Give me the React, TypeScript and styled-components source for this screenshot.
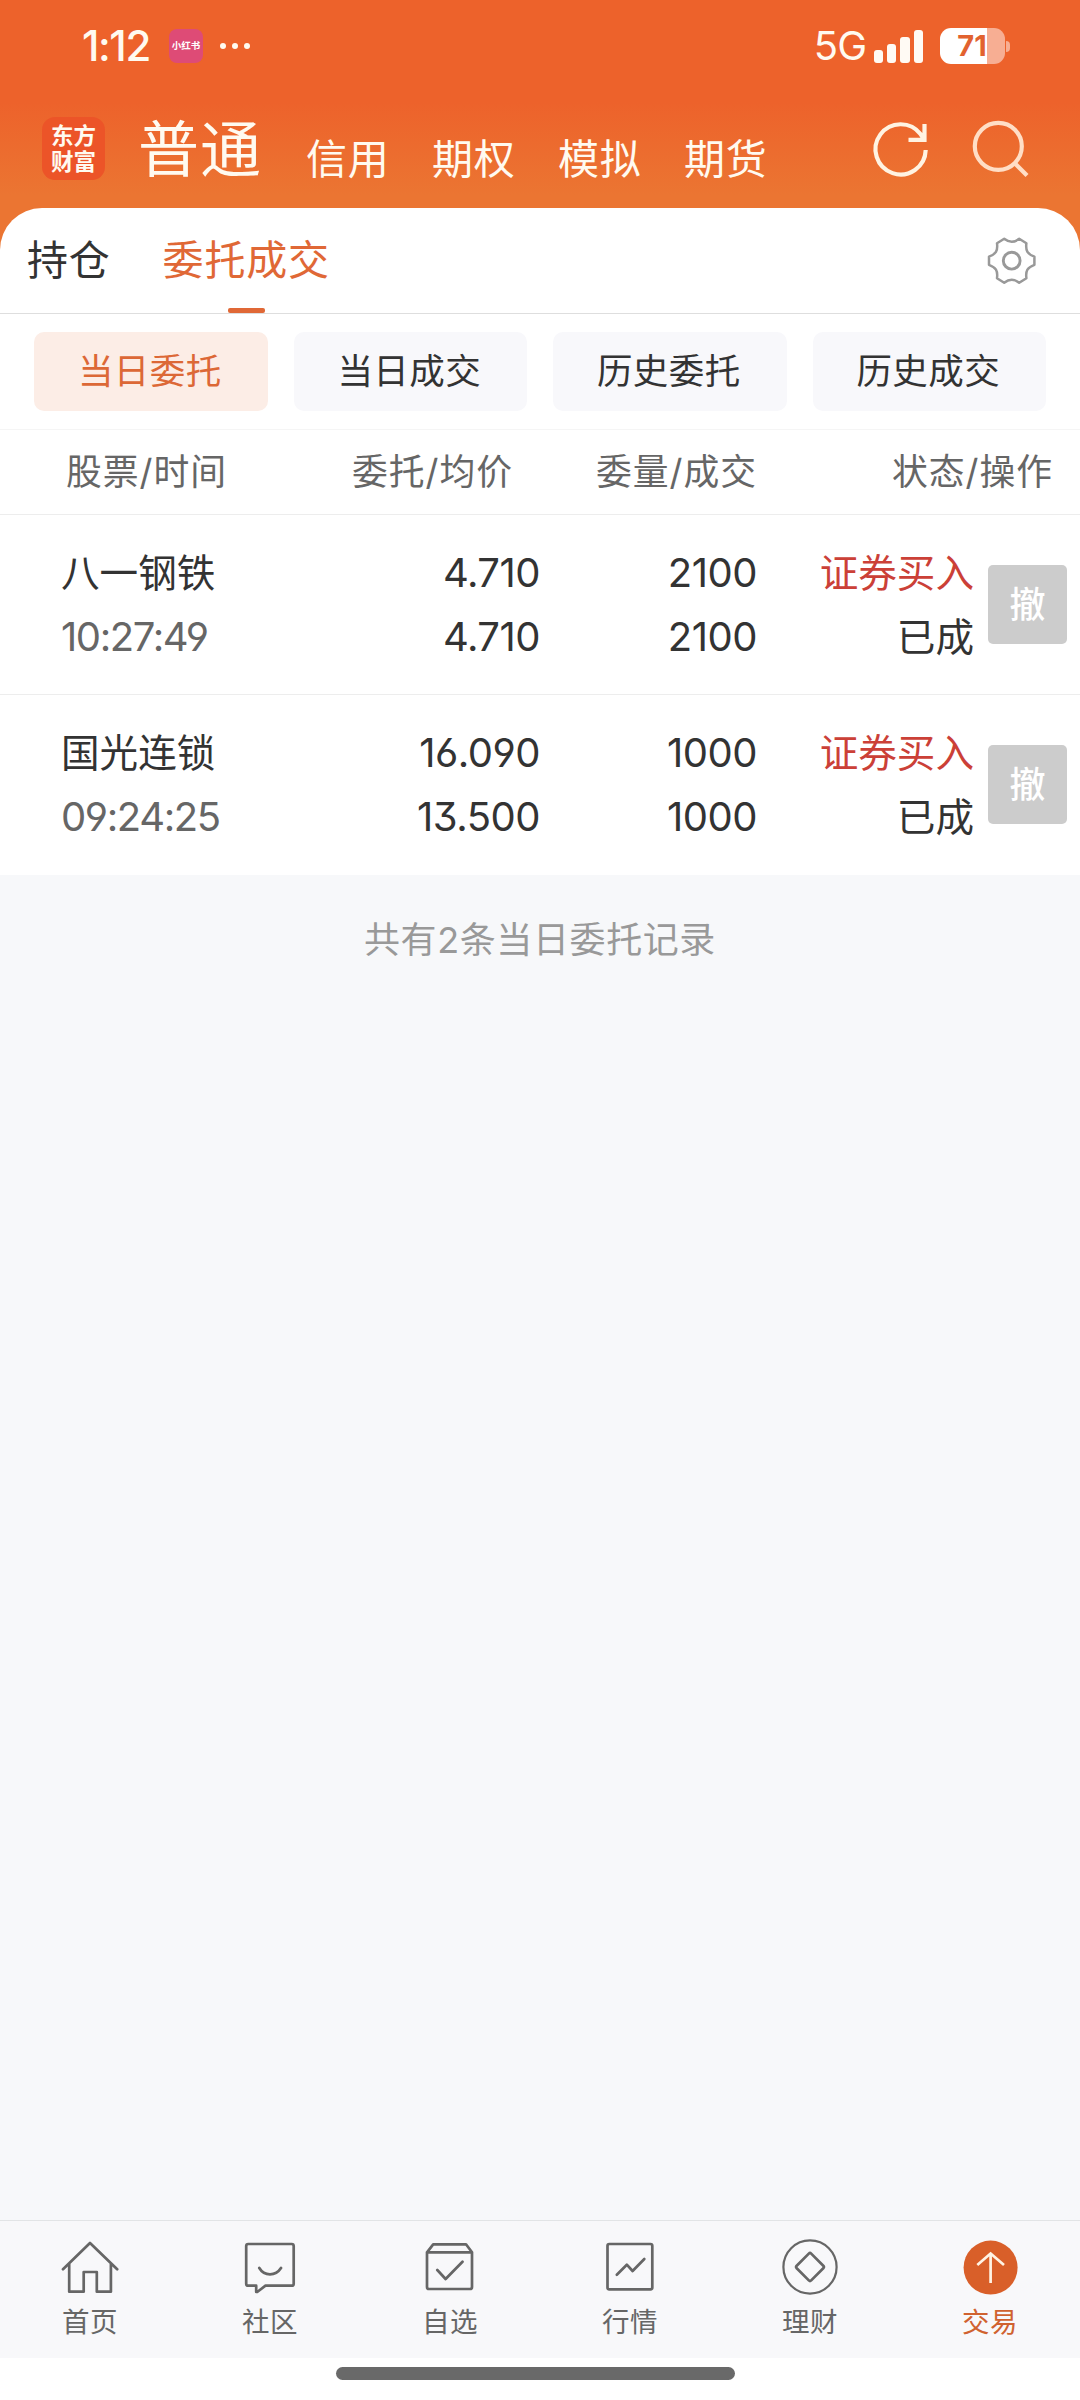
import React from 'react';
import styled, { createGlobalStyle } from 'styled-components';

const GlobalStyle = createGlobalStyle`
  * { box-sizing: border-box; }
  body {
    margin: 0;
    font-family: Inter, "Noto Sans CJK SC", sans-serif;
    color: #333;
    background: #fff;
  }
`;

const Screen = styled.div`
  width: 1080px;
  height: 2400px;
  display: flex;
  flex-direction: column;
  overflow: hidden;
  white-space: nowrap;
  background: linear-gradient(180deg, #ed622b 0px, #ed622b 102px, #eb7532 195px, #eb7532 260px);
`;

const StatusBar = styled.div`
  height: 92px;
  flex: none;
  display: flex;
  align-items: center;
  padding: 0 70px 0 82px;
  color: #fffaf0;
`;

const Clock = styled.div`
  width: 87px;
  font-size: 42px;
  font-weight: 500;
  line-height: 50px;
  letter-spacing: -1.4px;
`;

const AppBadge = styled.div`
  width: 34px;
  height: 34px;
  border-radius: 8px;
  background: #de4b76;
  color: #fff;
  font-size: 9.5px;
  font-weight: 700;
  line-height: 34px;
  text-align: center;
`;

const Dots = styled.div`
  display: flex;
  gap: 6px;
  margin-left: 17px;
`;

const Dot = styled.i`
  width: 6px;
  height: 6px;
  border-radius: 50%;
  background: #fffaf0;
`;

const Network = styled.div`
  margin-left: auto;
  font-size: 40px;
  line-height: 50px;
  letter-spacing: -1px;
  width: 60px;
`;

const SignalBars = styled.div`
  display: flex;
  align-items: flex-end;
  gap: 4px;
  height: 33px;
`;

const SignalBar = styled.i<{ $h: number }>`
  width: 9.3px;
  height: ${(p) => p.$h}px;
  border-radius: 3px;
  background: #fffaf4;
`;

const Battery = styled.div`
  width: 65px;
  height: 36px;
  margin-left: 17px;
  border-radius: 11px;
  background: linear-gradient(90deg, #fff 47px, #f7ae93 47px);
  color: #e2622f;
  font-size: 29px;
  font-weight: 700;
  line-height: 36px;
  text-align: center;
  padding-right: 1px;
`;

const BatteryTip = styled.i`
  width: 4px;
  height: 11px;
  margin-left: 1px;
  border-radius: 0 5px 5px 0;
  background: #f7ae93;
`;

const Header = styled.header`
  height: 116px;
  flex: none;
  display: flex;
  align-items: flex-start;
  padding-left: 42px;
  color: #fffaf0;
`;

const Logo = styled.div`
  width: 63px;
  height: 63px;
  margin: 25px 33px 0 0;
  padding-top: 6px;
  border-radius: 13px;
  background: #ec5428;
  text-align: center;
  font-size: 22.5px;
  font-weight: 700;
  line-height: 26px;
`;

const Market = styled.div<{ $active?: boolean }>`
  font-size: ${(p) => (p.$active ? 61 : 41)}px;
  letter-spacing: ${(p) => (p.$active ? 1 : 0.8)}px;
  line-height: 60px;
  width: ${(p) => (p.$active ? 168 : 126)}px;
  margin-top: ${(p) => (p.$active ? 28 : 37)}px;
`;

const HeaderIcon = styled.svg`
  width: 64px;
  height: 64px;
  flex: none;
  margin: 26px 36px 0 0;
  fill: none;
  stroke-width: 4.2;
`;

const HeaderTools = styled.div`
  display: flex;
  margin-left: 58px;
`;

const Panel = styled.section`
  flex: none;
  background: #fff;
  border-radius: 42px 42px 0 0;
`;

const TabBar = styled.nav`
  height: 106px;
  display: flex;
  padding: 0 44px 0 27px;
  border-bottom: 1px solid #dedede;
`;

const Tab = styled.div<{ $active?: boolean }>`
  display: flex;
  flex-direction: column;
  justify-content: space-between;
  align-items: center;
  margin-right: 52px;
  font-size: 41px;
  letter-spacing: 0.8px;
  line-height: 105px;
  height: 105px;
  color: ${(p) => (p.$active ? '#e06836' : '#333')};

  &::after {
    content: '';
    width: 37px;
    height: 5px;
    flex: none;
    border-radius: 2px;
    margin-top: -5px;
    background: ${(p) => (p.$active ? '#e06836' : 'transparent')};
  }
`;

const Gear = styled.svg`
  width: 50px;
  height: 50px;
  margin: 28px 0 0 auto;
  fill: none;
  stroke: #999;
  stroke-width: 2.5;
  stroke-linejoin: round;
`;

const Chips = styled.div`
  height: 116px;
  display: grid;
  grid-template-columns: repeat(4, 1fr);
  gap: 26px;
  padding: 18px 34px;
  border-bottom: 1px solid #f5f5f5;
`;

const Chip = styled.button<{ $active?: boolean }>`
  height: 79px;
  padding: 0 2px 0 0;
  border: 0;
  border-radius: 10px;
  font: inherit;
  font-size: 35.5px;
  line-height: 77px;
  letter-spacing: 0.4px;
  background: ${(p) => (p.$active ? '#fcede6' : '#f8f8fb')};
  color: ${(p) => (p.$active ? '#dc6836' : '#333')};
`;

const Columns = styled.div`
  height: 85px;
  display: grid;
  grid-template-columns: 286px 244px 296px auto;
  padding-left: 66px;
  border-bottom: 1px solid #ededed;
  color: #666;
  font-size: 35.8px;
  line-height: 85px;
  letter-spacing: 1px;
`;

const OrderRow = styled.div`
  height: 180px;
  display: grid;
  grid-template-columns: 300px 179px 217px 217px 79px;
  align-items: center;
  padding-left: 61px;
  border-bottom: 1px solid #ededed;

  &:last-child { border-bottom-color: #fff; }
`;

const Cell = styled.div<{ $end?: boolean }>`
  display: flex;
  flex-direction: column;
  align-items: ${(p) => (p.$end ? 'flex-end' : 'flex-start')};
  font-size: 38.6px;
  line-height: 64px;
  font-feature-settings: 'cv03', 'cv04', 'cv09';
`;

const Figure = styled.span<{ $muted?: boolean }>`
  font-size: 40px;
  letter-spacing: ${(p) => (p.$muted ? -1.4 : -0.5)}px;
  color: ${(p) => (p.$muted ? '#666' : '#333')};
`;

const Side = styled.span`
  color: #cb4037;
`;

const CancelButton = styled.button`
  width: 79px;
  height: 79px;
  margin-left: 14px;
  padding: 0 0 5px;
  border: 0;
  border-radius: 5px;
  background: #ccc;
  color: #fff;
  font: inherit;
  font-size: 36px;
  font-weight: 500;
`;

const Body = styled.main`
  flex: 1;
  background: #f7f8fa;
`;

const Summary = styled.p`
  margin: 35px 0 0;
  text-align: center;
  color: #999;
  font-size: 36px;
  letter-spacing: 0.6px;
  line-height: 60px;
`;

const BottomNav = styled.nav`
  height: 138px;
  flex: none;
  display: grid;
  grid-template-columns: repeat(6, 1fr);
  background: #f8f8fa;
  border-top: 1px solid #e2e4e6;
`;

const NavItem = styled.div<{ $active?: boolean }>`
  display: flex;
  flex-direction: column;
  align-items: center;
  padding-top: 16px;
  font-size: 27.5px;
  letter-spacing: 0.5px;
  line-height: 40px;
  color: ${(p) => (p.$active ? '#d0622f' : '#666')};

  svg {
    width: 60px;
    height: 60px;
    margin-bottom: 5px;
    fill: none;
    stroke: #666;
    stroke-width: 2.7;
    stroke-linejoin: round;
    stroke-linecap: round;
  }
`;

const GestureArea = styled.div`
  height: 42px;
  flex: none;
  padding: 9px 0 0 336px;
  background: #fff;
`;

const GestureBar = styled.div`
  width: 399px;
  height: 13px;
  border-radius: 7px;
  background: #696969;
`;

const gearPath =
  'M18.2 2.8 Q25.7 8.6 33.2 2.8 L40.4 7.2 C39.4 15 41.5 18 48.4 20.6 V28.8 C41.5 31.4 39.4 34.4 40.4 42.2 L33.2 46.8 Q25.7 40.8 18.2 46.8 L11 42.2 C12 34.4 9.9 31.4 3 28.8 V20.6 C9.9 18 12 15 11 7.2 Z';

const orders = [
  { name: '八一钢铁', time: '10:27:49', price: '4.710', average: '4.710', quantity: '2100', filled: '2100' },
  { name: '国光连锁', time: '09:24:25', price: '16.090', average: '13.500', quantity: '1000', filled: '1000' },
];

const navItems = [
  {
    label: '首页',
    icon: <path d="M3 32.3 30 6 57.2 32.3M9.2 27V54.7H23.7V35H36.8V54.7H50.9V27" />,
  },
  {
    label: '社区',
    icon: (
      <path d="M8.2 7H51.7Q53.7 7 53.7 9V46.7Q53.7 48.7 51.7 48.7H25.5L17.2 55H16.2V48.7H8.2Q6.2 48.7 6.2 46.7V9Q6.2 7 8.2 7ZM19.3 31Q23 37.3 30 37.3T41 31" />
    ),
  },
  {
    label: '自选',
    icon: (
      <path d="M7 15.3H52V50Q52 52 50 52H9Q7 52 7 50ZL13.2 7.3H46L52 15.3M17.3 33 25.6 42 42.5 24.7" />
    ),
  },
  {
    label: '行情',
    icon: (
      <>
        <rect x="7.5" y="7" width="44.8" height="45.3" rx="1.8" />
        <path d="M16.8 37.7 26.8 27.7 32.6 34 44.3 22" />
      </>
    ),
  },
  {
    label: '理财',
    icon: (
      <>
        <circle cx="30" cy="30" r="26.6" strokeWidth="2.2" />
        <path d="M28.8 16.6Q30 15.4 31.2 16.6L43.3 28.8Q44.5 30 43.3 31.2L31.2 43.4Q30 44.6 28.8 43.4L16.7 31.2Q15.5 30 16.7 28.8Z" />
      </>
    ),
  },
  {
    label: '交易',
    active: true,
    icon: (
      <>
        <circle cx="30.6" cy="30.6" r="27" fill="#d95f29" stroke="none" />
        <path d="M30.6 46V16.5M17.3 28 30.6 16.5 44 28" stroke="#fff3e4" strokeLinecap="butt" strokeLinejoin="miter" />
      </>
    ),
  },
];

export default function App() {
  return (
    <Screen>
      <GlobalStyle />
      <StatusBar>
        <Clock>1:12</Clock>
        <AppBadge>小红书</AppBadge>
        <Dots>
          <Dot />
          <Dot />
          <Dot />
        </Dots>
        <Network>5G</Network>
        <SignalBars>
          {[13, 19, 26, 33].map((h) => (
            <SignalBar key={h} $h={h} />
          ))}
        </SignalBars>
        <Battery>71</Battery>
        <BatteryTip />
      </StatusBar>

      <Header>
        <Logo>
          东方
          <br />
          财富
        </Logo>
        <Market $active>普通</Market>
        <Market>信用</Market>
        <Market>期权</Market>
        <Market>模拟</Market>
        <Market>期货</Market>
        <HeaderTools>
          <HeaderIcon viewBox="0 0 64 64" stroke="#fff3e2">
            <path d="M57.7 32A25.1 25.1 0 1 1 52.7 16.3L55.5 20.5M56.5 6V21.8H40.5" />
          </HeaderIcon>
          <HeaderIcon viewBox="0 0 64 64" stroke="#ffdec6">
            <circle cx="30.3" cy="28.3" r="23.5" />
            <path d="M46.5 45 59 57.5" />
          </HeaderIcon>
        </HeaderTools>
      </Header>

      <Panel>
        <TabBar>
          <Tab>持仓</Tab>
          <Tab $active>委托成交</Tab>
          <Gear viewBox="0 0 50 50">
            <path d={gearPath} />
            <circle cx="25.7" cy="24.7" r="8.4" strokeWidth="2.9" />
          </Gear>
        </TabBar>
        <Chips>
          <Chip $active>当日委托</Chip>
          <Chip>当日成交</Chip>
          <Chip>历史委托</Chip>
          <Chip>历史成交</Chip>
        </Chips>
        <Columns>
          <span>股票/时间</span>
          <span>委托/均价</span>
          <span>委量/成交</span>
          <span>状态/操作</span>
        </Columns>
        {orders.map((order) => (
          <OrderRow key={order.name}>
            <Cell>
              <span>{order.name}</span>
              <Figure $muted>{order.time}</Figure>
            </Cell>
            <Cell $end>
              <Figure>{order.price}</Figure>
              <Figure>{order.average}</Figure>
            </Cell>
            <Cell $end>
              <Figure>{order.quantity}</Figure>
              <Figure>{order.filled}</Figure>
            </Cell>
            <Cell $end>
              <Side>证券买入</Side>
              <span>已成</span>
            </Cell>
            <CancelButton>撤</CancelButton>
          </OrderRow>
        ))}
      </Panel>

      <Body>
        <Summary>共有2条当日委托记录</Summary>
      </Body>

      <BottomNav>
        {navItems.map((item) => (
          <NavItem key={item.label} $active={item.active}>
            <svg viewBox="0 0 60 60">{item.icon}</svg>
            {item.label}
          </NavItem>
        ))}
      </BottomNav>
      <GestureArea>
        <GestureBar />
      </GestureArea>
    </Screen>
  );
}
